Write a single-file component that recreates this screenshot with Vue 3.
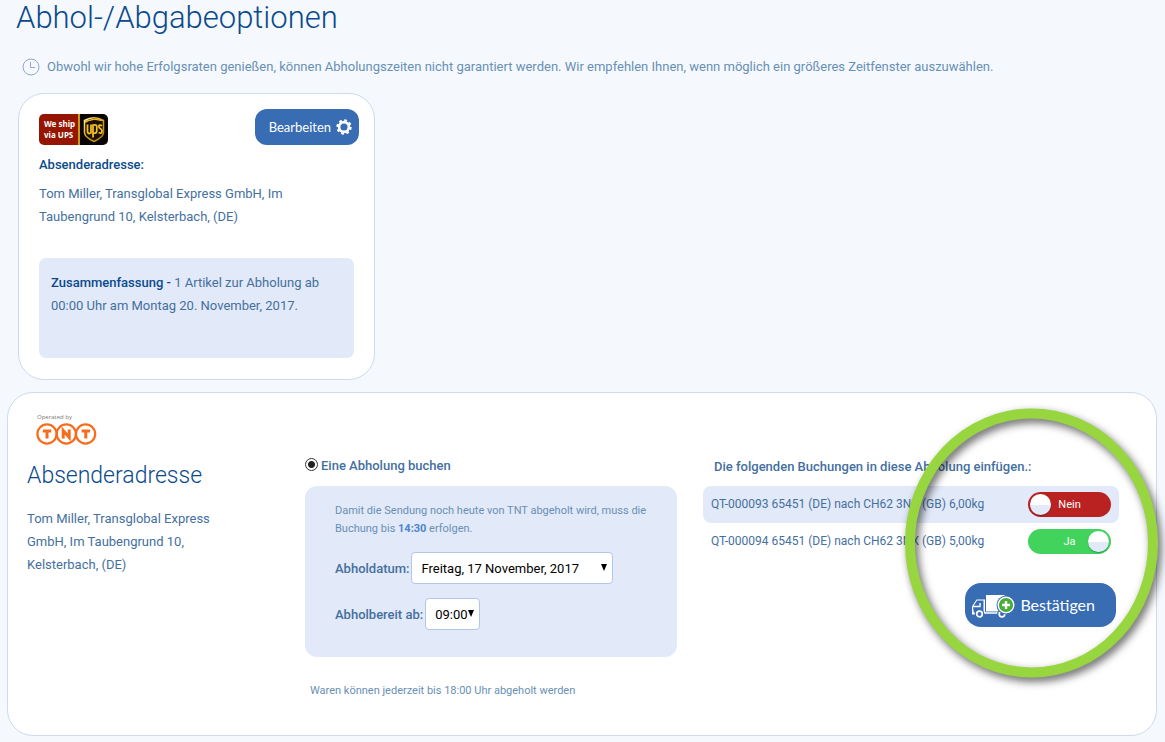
<script setup>
import { ref } from 'vue'

const mode = ref('pickup')
const pickupDate = ref('2017-11-17')
const readyFrom = ref('09:00')
const bookings = ref([
  { id: 'QT-000093', text: 'QT-000093 65451 (DE) nach CH62 3NX (GB) 6,00kg', on: false },
  { id: 'QT-000094', text: 'QT-000094 65451 (DE) nach CH62 3NX (GB) 5,00kg', on: true },
])
</script>

<template>
  <main class="page">
    <h1 class="title">Abhol-/Abgabeoptionen</h1>

    <p class="notice">
      <svg class="clock" viewBox="0 0 18 18" aria-hidden="true">
        <circle cx="9" cy="9" r="8" />
        <path d="M8.5 4v5.5H13" />
      </svg>
      <span>Obwohl wir hohe Erfolgsraten genießen, können Abholungszeiten nicht garantiert werden. Wir empfehlen Ihnen, wenn möglich ein größeres Zeitfenster auszuwählen.</span>
    </p>

    <section class="card ups-card">
      <header class="ups-head">
        <svg class="ups-logo" viewBox="0 0 69 31" role="img" aria-label="We ship via UPS">
          <defs>
            <clipPath id="ups-clip"><rect width="69" height="31" rx="5" /></clipPath>
            <linearGradient id="ups-gold" x1="0" y1="0" x2="1" y2="1">
              <stop offset="0" stop-color="#fff3b0" />
              <stop offset="0.4" stop-color="#e0ae1c" />
              <stop offset="1" stop-color="#a97a08" />
            </linearGradient>
          </defs>
          <g clip-path="url(#ups-clip)">
            <rect width="40" height="31" fill="#951500" />
            <rect x="40" width="29" height="31" fill="#080402" />
            <rect x="39" width="2" height="31" fill="#c79a12" />
          </g>
          <text x="5" y="13" class="ups-small">We ship</text>
          <text x="5" y="24" class="ups-small">via UPS</text>
          <path d="M45.500 6.500Q55 1 64.500 6.500V18.500Q64.500 23 55 27.500Q45.500 23 45.500 18.500Z" fill="#1d1003" stroke="url(#ups-gold)" stroke-width="1.500" />
          <path d="M46.500 8.500Q53 3.500 63.500 6.500Q55 4 46.500 7Z" fill="#e5b726" stroke="#e5b726" stroke-width="1" />
          <path d="M48.500 10.500V17Q48.500 19.500 50.200 19.500T52 18V10.500V19.500M54 23.500V11.200Q57.800 10 57.800 13V16.500Q57.800 20 54 19M63 11.800Q59.800 10 59.800 12.700Q60 14 61.500 14.700T63 17Q63 20.400 59.700 18.500" fill="none" stroke="#f0bd24" stroke-width="1.800" />
        </svg>
        <button type="button" class="btn edit">
          Bearbeiten
          <svg class="gear" viewBox="0 0 16 16" aria-hidden="true">
            <circle cx="8" cy="8" r="4.900" fill="none" stroke="#fff" stroke-width="2.600" />
            <circle cx="8" cy="8" r="6.700" fill="none" stroke="#fff" stroke-width="2" stroke-dasharray="2.800 2.462" />
          </svg>
        </button>
      </header>
      <h2 class="label">Absenderadresse:</h2>
      <p class="address">Tom Miller, Transglobal Express GmbH, Im Taubengrund 10, Kelsterbach, (DE)</p>
      <p class="summary"><b>Zusammenfassung -</b> 1 Artikel zur Abholung ab 00:00 Uhr am Montag 20. November, 2017.</p>
    </section>

    <section class="card tnt-card">
      <div class="sender">
        <svg class="tnt-logo" viewBox="0 0 62 32" role="img" aria-label="Operated by TNT">
          <text x="1" y="6" class="operated">Operated by</text>
          <g fill="none" stroke="#f76b1c" stroke-width="2.200">
            <circle cx="11" cy="21" r="9.600" />
            <circle cx="30.300" cy="21" r="9.600" />
            <circle cx="49.600" cy="21" r="9.600" />
          </g>
          <g fill="none" stroke="#f76b1c" stroke-width="3">
            <path d="M6.800 18H15.300M11 17V25.500" />
            <path d="M27.200 25.500V17.500L33.200 24.500V16.500" />
            <path d="M45.600 18H54.100M49.800 17V25.500" />
          </g>
        </svg>
        <h2 class="subtitle">Absenderadresse</h2>
        <p class="address narrow">Tom Miller, Transglobal Express GmbH, Im Taubengrund 10, Kelsterbach, (DE)</p>
      </div>

      <div class="pickup">
        <label class="mode">
          <input v-model="mode" type="radio" name="mode" value="pickup" />
          Eine Abholung buchen
        </label>
        <div class="panel">
          <p class="deadline">Damit die Sendung noch heute von TNT abgeholt wird, muss die Buchung bis <b>14:30</b> erfolgen.</p>
          <div class="field">
            <label for="pickup-date">Abholdatum:</label>
            <span class="select date">
              <select id="pickup-date" v-model="pickupDate">
                <option value="2017-11-17">Freitag, 17 November, 2017</option>
              </select>
              <svg viewBox="0 0 6 7" aria-hidden="true"><path d="M0 0H6L3 7Z" /></svg>
            </span>
          </div>
          <div class="field">
            <label for="ready-from">Abholbereit ab:</label>
            <span class="select time">
              <select id="ready-from" v-model="readyFrom">
                <option>09:00</option>
              </select>
              <svg viewBox="0 0 6 7" aria-hidden="true"><path d="M0 0H6L3 7Z" /></svg>
            </span>
          </div>
        </div>
        <p class="hint">Waren können jederzeit bis 18:00 Uhr abgeholt werden</p>
      </div>

      <div class="bookings">
        <h3 class="bookings-title">Die folgenden Buchungen in diese Abholung einfügen.:</h3>
        <label v-for="b in bookings" :key="b.id" class="booking">
          <span>{{ b.text }}</span>
          <span class="switch" :class="{ on: b.on }">
            <input v-model="b.on" type="checkbox" />
            <span class="state">{{ b.on ? 'Ja' : 'Nein' }}</span>
            <span class="knob"></span>
          </span>
        </label>
        <button type="button" class="btn confirm">
          <svg class="truck" viewBox="0 0 44 26" aria-hidden="true">
            <path d="M15 3H34L30 9V19.500H15Z" fill="#fff" />
            <path d="M2 15L6 8.500H13V19.500H11.500V21H15L14 19.500V7.500H5.500L1 14.500V22.500H4V20.500H2.800Z" fill="#fff" />
            <path d="M2 14.500H9V11M13.200 8V21M13 21H28" fill="none" stroke="#fff" stroke-width="1.400" />
            <circle cx="8.500" cy="22" r="4.800" fill="#386cb3" />
            <circle cx="8.500" cy="22" r="2.800" fill="none" stroke="#fff" stroke-width="1.700" />
            <circle cx="31" cy="22" r="4.800" fill="#386cb3" />
            <circle cx="31" cy="22" r="2.800" fill="none" stroke="#fff" stroke-width="1.700" />
            <circle cx="35" cy="13" r="9.500" fill="#386cb3" />
            <circle cx="35" cy="13" r="7.800" fill="#46ad35" stroke="#fff" stroke-width="1.400" />
            <path d="M35 9V17M31 13H39" stroke="#fff" stroke-width="2.400" />
          </svg>
          Bestätigen
        </button>
        <svg class="marker" viewBox="0 0 253 270" aria-hidden="true">
          <ellipse cx="126.500" cy="135" rx="121.500" ry="129.500" />
        </svg>
      </div>
    </section>
  </main>
</template>

<style>
body {
  margin: 0;
  background: #f5f9fd;
}
</style>

<style scoped>
.page {
  box-sizing: border-box;
  padding: 0 8px 6px 7px;
  font-family: Roboto, "Liberation Sans", sans-serif;
  font-size: 13px;
  line-height: 23px;
  color: #44709f;
}
h1, h2, h3, p {
  margin: 0;
}
.title {
  padding-left: 9px;
  font-size: 31px;
  line-height: 35px;
  font-weight: 300;
  color: #0a4a8c;
}
.notice {
  display: flex;
  align-items: center;
  gap: 7px;
  margin: 20px 0 15px;
  padding-left: 15px;
  color: #6890b5;
}
.clock {
  flex: none;
  width: 18px;
  height: 18px;
  fill: none;
  stroke: #93a6d3;
  stroke-width: 1;
}
.card {
  box-sizing: border-box;
  background: #fff;
  border: 1px solid #cddaf1;
  border-radius: 26px;
}
.ups-card {
  width: 357px;
  min-height: 287px;
  margin-left: 11px;
  padding: 15px 20px 21px;
  display: flex;
  flex-direction: column;
}
.ups-head {
  display: flex;
  justify-content: space-between;
  align-items: flex-end;
  margin-right: -5px;
}
.ups-logo {
  width: 69px;
  height: 31px;
}
.ups-small {
  font: bold 8px "Noto Sans", sans-serif;
  fill: #fff;
}
.btn {
  display: flex;
  align-items: center;
  border: 0;
  background: #386cb3;
  color: #fff;
  font-family: Lato, sans-serif;
  cursor: pointer;
}
.edit {
  height: 36px;
  gap: 5px;
  padding: 0 7px 1px 14px;
  border-radius: 12px;
  font-size: 13px;
}
.gear {
  width: 16px;
  height: 16px;
}
.label {
  margin-top: 8px;
  font-size: 13px;
  line-height: 23px;
  font-weight: 500;
  color: #0a4a8c;
}
.address {
  margin-top: 6px;
  max-width: 280px;
}
.summary {
  box-sizing: border-box;
  min-height: 100px;
  margin-top: auto;
  padding: 13px 12px;
  border-radius: 7px;
  background: #e2e9f8;
}
.summary b {
  font-weight: 500;
  color: #0a4a8c;
}
.tnt-card {
  display: grid;
  grid-template-columns: 252fr 372fr 416fr;
  column-gap: 26px;
  min-height: 344px;
  margin-top: 12px;
  padding: 20px 37px 20px 19px;
}
.tnt-logo {
  display: block;
  width: 62px;
  height: 32px;
  margin-left: 9px;
}
.operated {
  font: 6px "Open Sans", sans-serif;
  fill: #777;
}
.subtitle {
  margin-top: 16px;
  font-size: 23px;
  line-height: 30px;
  font-weight: 300;
  color: #0a4a8c;
}
.narrow {
  max-width: 200px;
  margin-top: 16px;
}
.mode {
  display: flex;
  align-items: center;
  gap: 3px;
  margin-top: 41px;
  font-weight: 500;
}
.mode input {
  appearance: none;
  box-sizing: border-box;
  width: 13px;
  height: 13px;
  margin: 0 0 3px;
  border: 1px solid #333;
  border-radius: 50%;
  background: radial-gradient(circle, #222 3px, #fff 4px);
}
.panel {
  box-sizing: border-box;
  min-height: 171px;
  margin-top: 9px;
  padding: 16px 30px 27px;
  border-radius: 12px;
  background: #e2e9f8;
}
.deadline {
  font-size: 11px;
  line-height: 18px;
  color: #6890b5;
}
.deadline b {
  color: #4a86d0;
}
.field {
  display: flex;
  align-items: center;
  gap: 2px;
  margin-top: 14px;
  font-weight: 500;
}
.select {
  position: relative;
  display: inline-flex;
}
.select select {
  appearance: none;
  box-sizing: border-box;
  width: 100%;
  height: 32px;
  padding: 0 9px;
  border: 1px solid #b3c6e8;
  border-radius: 4px;
  background: #fff;
  font: 13px Roboto, sans-serif;
  color: #000;
}
.select svg {
  position: absolute;
  top: 12px;
  right: 6px;
  width: 6px;
  height: 7px;
  pointer-events: none;
}
.date {
  width: 202px;
}
.time {
  width: 55px;
}
.hint {
  margin-top: 22px;
  padding-left: 5px;
  font-size: 11px;
  color: #6890b5;
}
.bookings {
  position: relative;
  display: flex;
  flex-direction: column;
}
.bookings-title {
  margin: 42px 0 8px;
  padding-left: 11px;
  font-size: 13px;
  line-height: 23px;
  font-weight: 500;
}
.booking {
  display: flex;
  align-items: center;
  justify-content: space-between;
  height: 37px;
  padding: 0 8px;
  border-radius: 8px;
  font-size: 12px;
}
.booking:nth-of-type(odd) {
  background: #e2e9f8;
}
.switch {
  position: relative;
  display: flex;
  align-items: center;
  justify-content: center;
  width: 83px;
  height: 25px;
  border-radius: 13px;
  background: #ba2222;
  color: #fff;
  font-size: 11px;
}
.switch.on {
  background: #42d35c;
}
.switch input {
  position: absolute;
  inset: 0;
  width: 100%;
  height: 100%;
  margin: 0;
  opacity: 0;
  cursor: pointer;
}
.knob {
  position: absolute;
  top: 2px;
  left: 2px;
  width: 21px;
  height: 21px;
  border-radius: 50%;
  background: linear-gradient(#fff 50%, #e2e9f8 55%);
  box-shadow: 0 1px 1px rgba(0, 0, 60, 0.3);
  pointer-events: none;
}
.on .knob {
  left: auto;
  right: 2px;
}
.confirm {
  align-self: flex-end;
  height: 44px;
  gap: 5px;
  margin: 23px 3px 0 0;
  padding: 0 21px 1px 6px;
  border-radius: 16px;
  font-size: 16px;
}
.truck {
  width: 44px;
  height: 26px;
}
.marker {
  position: absolute;
  top: -5px;
  right: -39px;
  width: 253px;
  height: 270px;
  overflow: visible;
  fill: none;
  stroke: #97d63f;
  stroke-width: 10;
  filter: drop-shadow(3px 4px 4px rgba(0, 0, 0, 0.6));
  pointer-events: none;
}
</style>
